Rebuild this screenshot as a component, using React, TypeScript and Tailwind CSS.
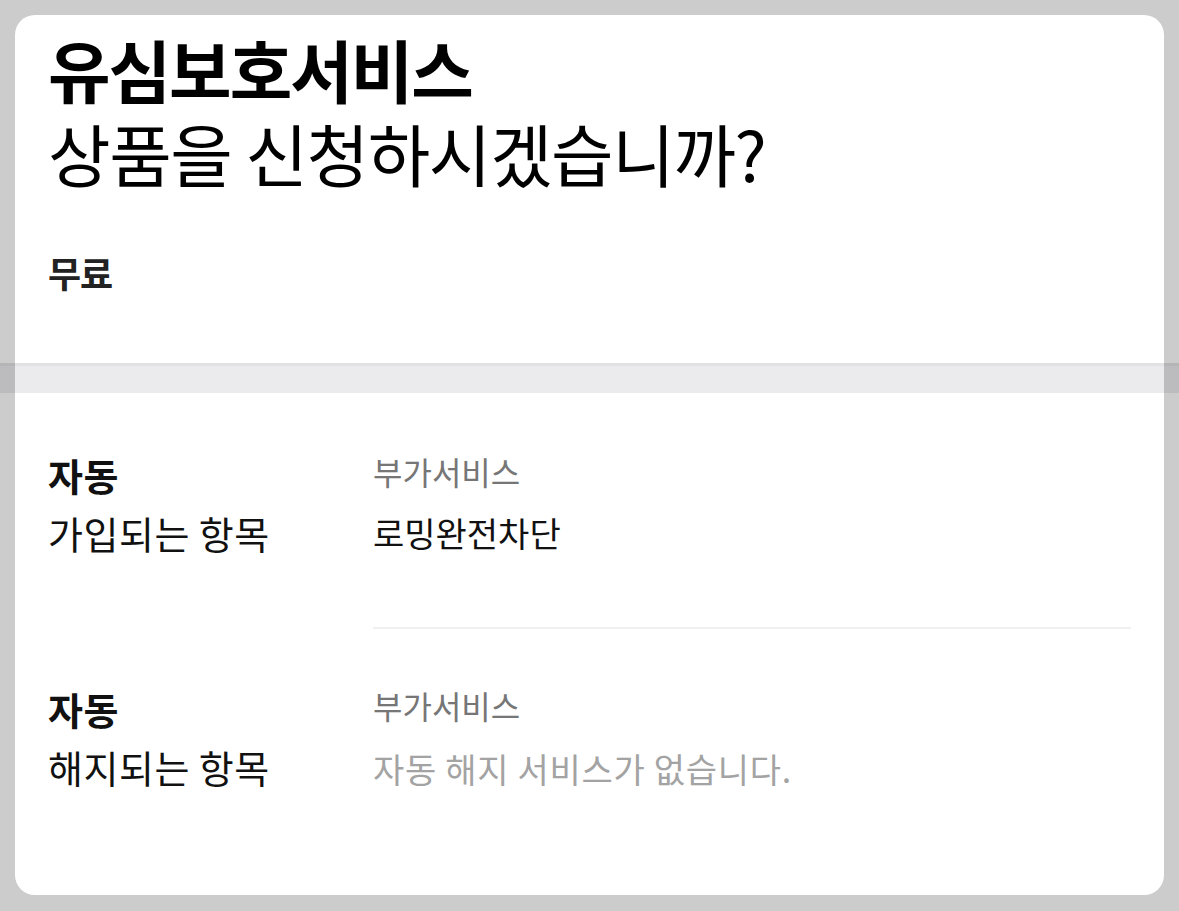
import React from "react";

type Row = {
  left: string;
  items: string;
  value: string;
  empty?: boolean;
};

const rows: Row[] = [
  { left: "가입되는 항목", items: "부가서비스", value: "로밍완전차단" },
  {
    left: "해지되는 항목",
    items: "부가서비스",
    value: "자동 해지 서비스가 없습니다.",
    empty: true,
  },
];

const font = "font-['Noto_Sans_CJK_KR','Noto_Sans',sans-serif]";

const App: React.FC = () => {
  return (
    <div className={`min-h-screen bg-[#cccccc] p-[15px] ${font}`}>
      <div className="bg-white rounded-[20px] px-[33px] pt-[12px] pb-[106px]">
        {/* Header */}
        <div className="text-[68px] leading-[84px] tracking-[-2px] text-black">
          <div className="font-bold">유심보호서비스</div>
          <div className="font-normal tracking-[-1.4px]">상품을 신청하시겠습니까?</div>
        </div>
        <div className="mt-[57px] text-[36px] leading-[40px] font-bold tracking-[-1px] text-[#222222]">
          무료
        </div>

        {/* Band */}
        <div className="-mx-[48px] mt-[71px] h-[30px] border-t-[3px] border-[rgba(0,0,0,0.035)] bg-[rgba(0,5,30,0.08)]" />

        {/* Rows */}
        {rows.map((row, i) => (
          <div key={row.left}>
            {i > 0 && <div className="ml-[325px] h-[2px] bg-[#f0f0f0]" />}
            <div
              className={`flex ${i === 0 ? "pt-[58px] pb-[72px]" : "pt-[56px]"}`}
            >
              <div className="w-[325px] shrink-0 pt-[2px] text-[38px] leading-[44px] text-[#111111] tracking-[0.5px]">
                <div className="font-bold">자동</div>
                <div className="mt-[14px]">{row.left}</div>
              </div>
              <div className="flex-1">
                <div className="text-[32px] leading-[40px] text-[#767676]">
                  {row.items}
                </div>
                <div
                  className={`text-[34px] leading-[40px] ${
                    row.empty
                      ? "mt-[24px] text-[#a3a3a3] tracking-[0.7px]"
                      : "mt-[22px] text-[#111111]"
                  }`}
                >
                  {row.value}
                </div>
              </div>
            </div>
          </div>
        ))}
      </div>
    </div>
  );
};

export default App;
